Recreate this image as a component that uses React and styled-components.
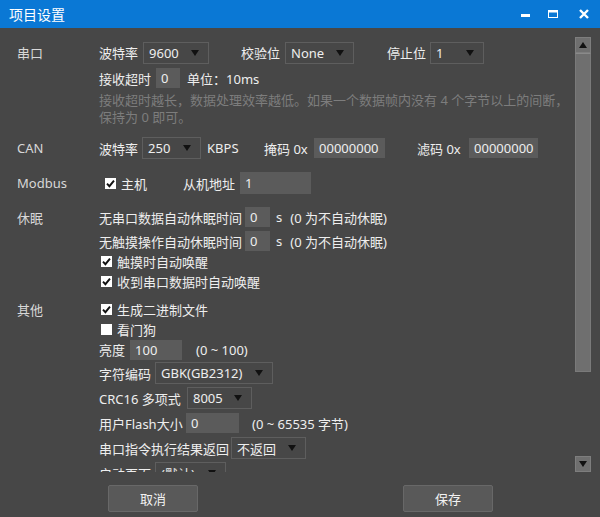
import React from 'react'
import styled, { createGlobalStyle } from 'styled-components'

const GlobalStyle = createGlobalStyle`
  html, body {
    margin: 0;
    padding: 0;
    background: #474747;
  }
  body {
    font-family: "Noto Sans", "Noto Sans CJK SC", sans-serif;
    font-size: 13px;
    color: #eeeeee;
  }
`

const Window = styled.div`
  width: 600px;
  height: 517px;
  display: flex;
  flex-direction: column;
  background: #474747;
  overflow: hidden;
`

const TitleBar = styled.div`
  height: 28px;
  flex: none;
  background: #0a78d5;
  display: flex;
  align-items: center;
  padding: 0 11px 0 9px;
  color: #ffffff;
`

const Title = styled.div`
  flex: 1;
  font-size: 14px;
  font-family: "Noto Sans CJK SC", sans-serif;
`

const WinButton = styled.div`
  width: 10px;
  height: 10px;
  margin-left: ${p => p.$ml || 0}px;
  display: flex;
`

const Main = styled.div`
  height: 444px;
  flex: none;
  display: flex;
`

const Content = styled.div`
  flex: 1;
  overflow: hidden;
  padding: 13px 0 0 17px;
`

const Section = styled.div`
  display: grid;
  grid-template-columns: 82px 1fr;
  margin-top: ${p => p.$mt || 0}px;
`

const SectionLabel = styled.div`
  height: ${p => p.$h || 22}px;
  display: flex;
  align-items: center;
  color: #d8d8d8;
`

const Rows = styled.div`
  display: flex;
  flex-direction: column;
`

const Row = styled.div`
  display: flex;
  align-items: center;
  height: ${p => p.$h || 22}px;
  margin-top: ${p => p.$mt || 0}px;
  white-space: nowrap;
`

const Text = styled.span`
  flex: none;
  margin-left: ${p => p.$ml || 0}px;
  width: ${p => (p.$w ? `${p.$w}px` : 'auto')};
`

const Hint = styled.div`
  margin-top: 4px;
  line-height: 17px;
  color: #7d7d7d;
`

const SelectBox = styled.div`
  flex: none;
  box-sizing: border-box;
  width: ${p => p.$w}px;
  height: 22px;
  margin-left: ${p => p.$ml ?? 5}px;
  border: 1px solid #5e5e5e;
  display: flex;
  align-items: center;
  padding: 0 9px 0 5px;
`

const Arrow = styled.span`
  margin-left: auto;
  width: 0;
  height: 0;
  border-left: 4.5px solid transparent;
  border-right: 4.5px solid transparent;
  border-top: 6px solid #111111;
`

const Field = styled.div`
  flex: none;
  box-sizing: border-box;
  width: ${p => p.$w}px;
  height: ${p => p.$h || 20}px;
  margin-left: ${p => p.$ml ?? 5}px;
  background: #5b5b5b;
  display: flex;
  align-items: center;
  padding-left: 5px;
`

const Check = styled.span`
  display: flex;
  align-items: center;
  margin-left: ${p => p.$ml || 0}px;
  flex: none;

  svg {
    margin-right: 5px;
  }
`

const Scrollbar = styled.div`
  width: 16px;
  margin: 9px 9px 0 0;
  display: flex;
  flex-direction: column;
`

const ScrollButton = styled.div`
  height: 16px;
  box-sizing: border-box;
  background: #6f6f6f;
  border: 1px solid #7e7e7e;
  display: flex;
  align-items: center;
  justify-content: center;
`

const Thumb = styled.div`
  height: 319px;
  box-sizing: border-box;
  background: #6f6f6f;
  border: 1px solid #7a7a7a;
  border-top-color: #8a8a8a;
`

const Track = styled.div`
  flex: 1;
`

const Footer = styled.div`
  flex: 1;
  display: flex;
  padding: 13px 0 0 108px;
  gap: 205px;
`

const Button = styled.div`
  width: 90px;
  height: 27px;
  box-sizing: border-box;
  background: #595959;
  border: 1px solid #686868;
  border-radius: 2px;
  display: flex;
  align-items: center;
  justify-content: center;
  color: #f2f2f2;
  font-family: "Noto Sans CJK SC", sans-serif;
`

function CheckBox({ checked, children, ml }) {
  return (
    <Check $ml={ml}>
      <svg width="11" height="11" viewBox="0 0 11 11">
        <rect width="11" height="11" fill="#ffffff" />
        {checked && (
          <path d="M2 5.6 L4.4 8.2 L9 2.6" stroke="#111" strokeWidth="1.9" fill="none" />
        )}
      </svg>
      {children}
    </Check>
  )
}

function Select({ w, ml, children }) {
  return (
    <SelectBox $w={w} $ml={ml}>
      {children}
      <Arrow />
    </SelectBox>
  )
}

function ScrollArrow({ down }) {
  return (
    <svg width="8" height="6" viewBox="0 0 8 6">
      <path d={down ? 'M0 0 H8 L4 6 Z' : 'M0 6 H8 L4 0 Z'} fill="#111" />
    </svg>
  )
}

export default function App() {
  return (
    <Window>
      <GlobalStyle />
      <TitleBar>
        <Title>项目设置</Title>
        <WinButton>
          <svg width="10" height="10" viewBox="0 0 10 10">
            <rect x="0" y="5" width="9" height="3" fill="#fff" />
          </svg>
        </WinButton>
        <WinButton $ml={17}>
          <svg width="10" height="10" viewBox="0 0 10 10">
            <rect x="0.5" y="1.5" width="9" height="7" fill="none" stroke="#fff" strokeWidth="1" />
            <rect x="0" y="1" width="10" height="2.5" fill="#fff" />
          </svg>
        </WinButton>
        <WinButton $ml={21}>
          <svg width="10" height="10" viewBox="0 0 10 10">
            <path d="M1 1 L9 9 M9 1 L1 9" stroke="#fff" strokeWidth="2.4" />
          </svg>
        </WinButton>
      </TitleBar>

      <Main>
        <Content>
          <Section>
            <SectionLabel $h={23}>串口</SectionLabel>
            <Rows>
              <Row $h={23}>
                <Text>波特率</Text>
                <Select w={66}>9600</Select>
                <Text $ml={32}>校验位</Text>
                <Select w={69}>None</Select>
                <Text $ml={33}>停止位</Text>
                <Select w={54} ml={4}>1</Select>
              </Row>
              <Row $h={20} $mt={4}>
                <Text>接收超时</Text>
                <Field $w={24}>0</Field>
                <Text $ml={7}>单位：10ms</Text>
              </Row>
              <Hint>
                接收超时越长，数据处理效率越低。如果一个数据帧内没有 4 个字节以上的间断，
                <br />
                保持为 0 即可。
              </Hint>
            </Rows>
          </Section>

          <Section $mt={11}>
            <SectionLabel>CAN</SectionLabel>
            <Rows>
              <Row>
                <Text>波特率</Text>
                <Select w={59} ml={4}>250</Select>
                <Text $ml={6} $w={57}>KBPS</Text>
                <Text $w={50}>掩码 0x</Text>
                <Field $w={71} $ml={0}>00000000</Field>
                <Text $ml={32} $w={52}>滤码 0x</Text>
                <Field $w={69} $ml={0}>00000000</Field>
              </Row>
            </Rows>
          </Section>

          <Section $mt={13}>
            <SectionLabel>Modbus</SectionLabel>
            <Rows>
              <Row>
                <CheckBox checked ml={6}>主机</CheckBox>
                <Text $ml={36}>从机地址</Text>
                <Field $w={71} $h={22}>1</Field>
              </Row>
            </Rows>
          </Section>

          <Section $mt={13}>
            <SectionLabel $h={20}>休眠</SectionLabel>
            <Rows>
              <Row $h={20}>
                <Text>无串口数据自动休眠时间</Text>
                <Field $w={25} $ml={3}>0</Field>
                <Text $ml={6}>s</Text>
                <Text $ml={8}>(0 为不自动休眠)</Text>
              </Row>
              <Row $h={20} $mt={4}>
                <Text>无触摸操作自动休眠时间</Text>
                <Field $w={25} $ml={3}>0</Field>
                <Text $ml={6}>s</Text>
                <Text $ml={8}>(0 为不自动休眠)</Text>
              </Row>
              <Row $h={20}>
                <CheckBox checked ml={2}>触摸时自动唤醒</CheckBox>
              </Row>
              <Row $h={20}>
                <CheckBox checked ml={2}>收到串口数据时自动唤醒</CheckBox>
              </Row>
            </Rows>
          </Section>

          <Section $mt={8}>
            <SectionLabel $h={20}>其他</SectionLabel>
            <Rows>
              <Row $h={20}>
                <CheckBox checked ml={2}>生成二进制文件</CheckBox>
              </Row>
              <Row $h={20}>
                <CheckBox ml={2}>看门狗</CheckBox>
              </Row>
              <Row $h={21}>
                <Text>亮度</Text>
                <Field $w={52}>100</Field>
                <Text $ml={14}>(0 ~ 100)</Text>
              </Row>
              <Row $mt={2}>
                <Text>字符编码</Text>
                <Select w={118} ml={4}>GBK(GB2312)</Select>
              </Row>
              <Row $mt={3}>
                <Text $w={88}>CRC16 多项式</Text>
                <Select w={65} ml={0}>8005</Select>
              </Row>
              <Row $mt={3}>
                <Text $w={87}>用户Flash大小</Text>
                <Field $w={53} $ml={0}>0</Field>
                <Text $ml={13}>(0 ~ 65535 字节)</Text>
              </Row>
              <Row $mt={3}>
                <Text>串口指令执行结果返回</Text>
                <Select w={75} ml={2}>不返回</Select>
              </Row>
              <Row $mt={3}>
                <Text>启动页面</Text>
                <Select w={71} ml={4}>(默认)</Select>
              </Row>
            </Rows>
          </Section>
        </Content>

        <Scrollbar>
          <ScrollButton>
            <ScrollArrow />
          </ScrollButton>
          <Thumb />
          <Track />
          <ScrollButton>
            <ScrollArrow down />
          </ScrollButton>
        </Scrollbar>
      </Main>

      <Footer>
        <Button>取消</Button>
        <Button>保存</Button>
      </Footer>
    </Window>
  )
}
